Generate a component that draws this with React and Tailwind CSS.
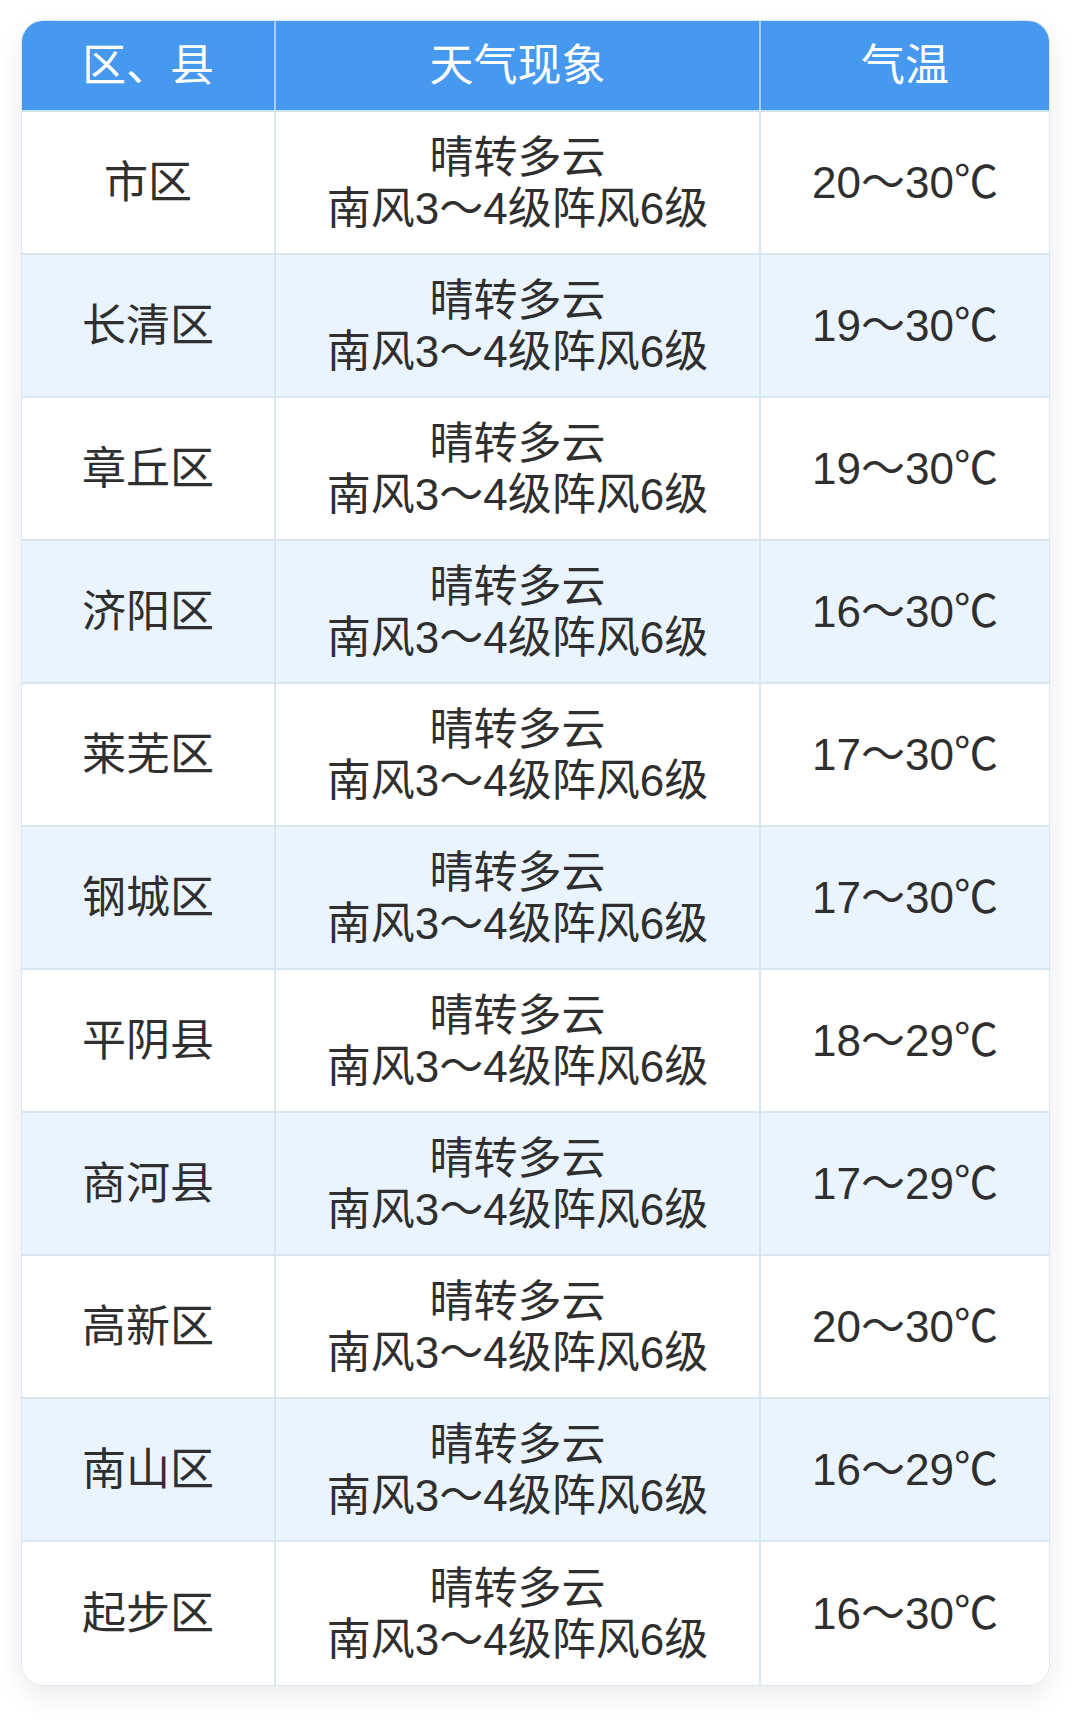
import React from "react";

const rows = [
  ["市区", "20～30℃"],
  ["长清区", "19～30℃"],
  ["章丘区", "19～30℃"],
  ["济阳区", "16～30℃"],
  ["莱芜区", "17～30℃"],
  ["钢城区", "17～30℃"],
  ["平阴县", "18～29℃"],
  ["商河县", "17～29℃"],
  ["高新区", "20～30℃"],
  ["南山区", "16～29℃"],
  ["起步区", "16～30℃"],
];

const font = { fontFamily: '"Liberation Sans", "Noto Sans CJK SC", sans-serif' };

export default function App() {
  return (
    <div className="min-h-[1720px] w-[1080px] bg-white pt-[20px]" style={font}>
      <div className="ml-[21px] w-[1029px] rounded-[22px] overflow-hidden border border-[#dbe7f2] shadow-[0_10px_30px_rgba(0,0,0,0.08)]">
        <div className="grid grid-cols-[254px_485px_1fr] h-[91px] bg-[#4799ef] text-white text-[44px] border-b-2 border-[#cfe3f7]">
          <div className="flex items-center justify-center border-r-2 border-[#a9cdf5]">区、县</div>
          <div className="flex items-center justify-center border-r-2 border-[#a9cdf5]">天气现象</div>
          <div className="flex items-center justify-center">气温</div>
        </div>
        {rows.map(([name, temp], i) => (
          <div
            key={name}
            className={
              "grid grid-cols-[254px_485px_1fr] h-[143px] text-[#2f2f2f] text-[44px] " +
              (i < rows.length - 1 ? "border-b-2 border-[#d9e5ef] " : "") +
              (i % 2 === 1 ? "bg-[#eaf4fe]" : "bg-white")
            }
          >
            <div className="flex items-center justify-center border-r-2 border-[#d9e5ef]">{name}</div>
            <div className="flex flex-col items-center justify-center border-r-2 border-[#d9e5ef] leading-[51px]">
              <div>晴转多云</div>
              <div>南风3～4级阵风6级</div>
            </div>
            <div className="flex items-center justify-center">{temp}</div>
          </div>
        ))}
      </div>
    </div>
  );
}
